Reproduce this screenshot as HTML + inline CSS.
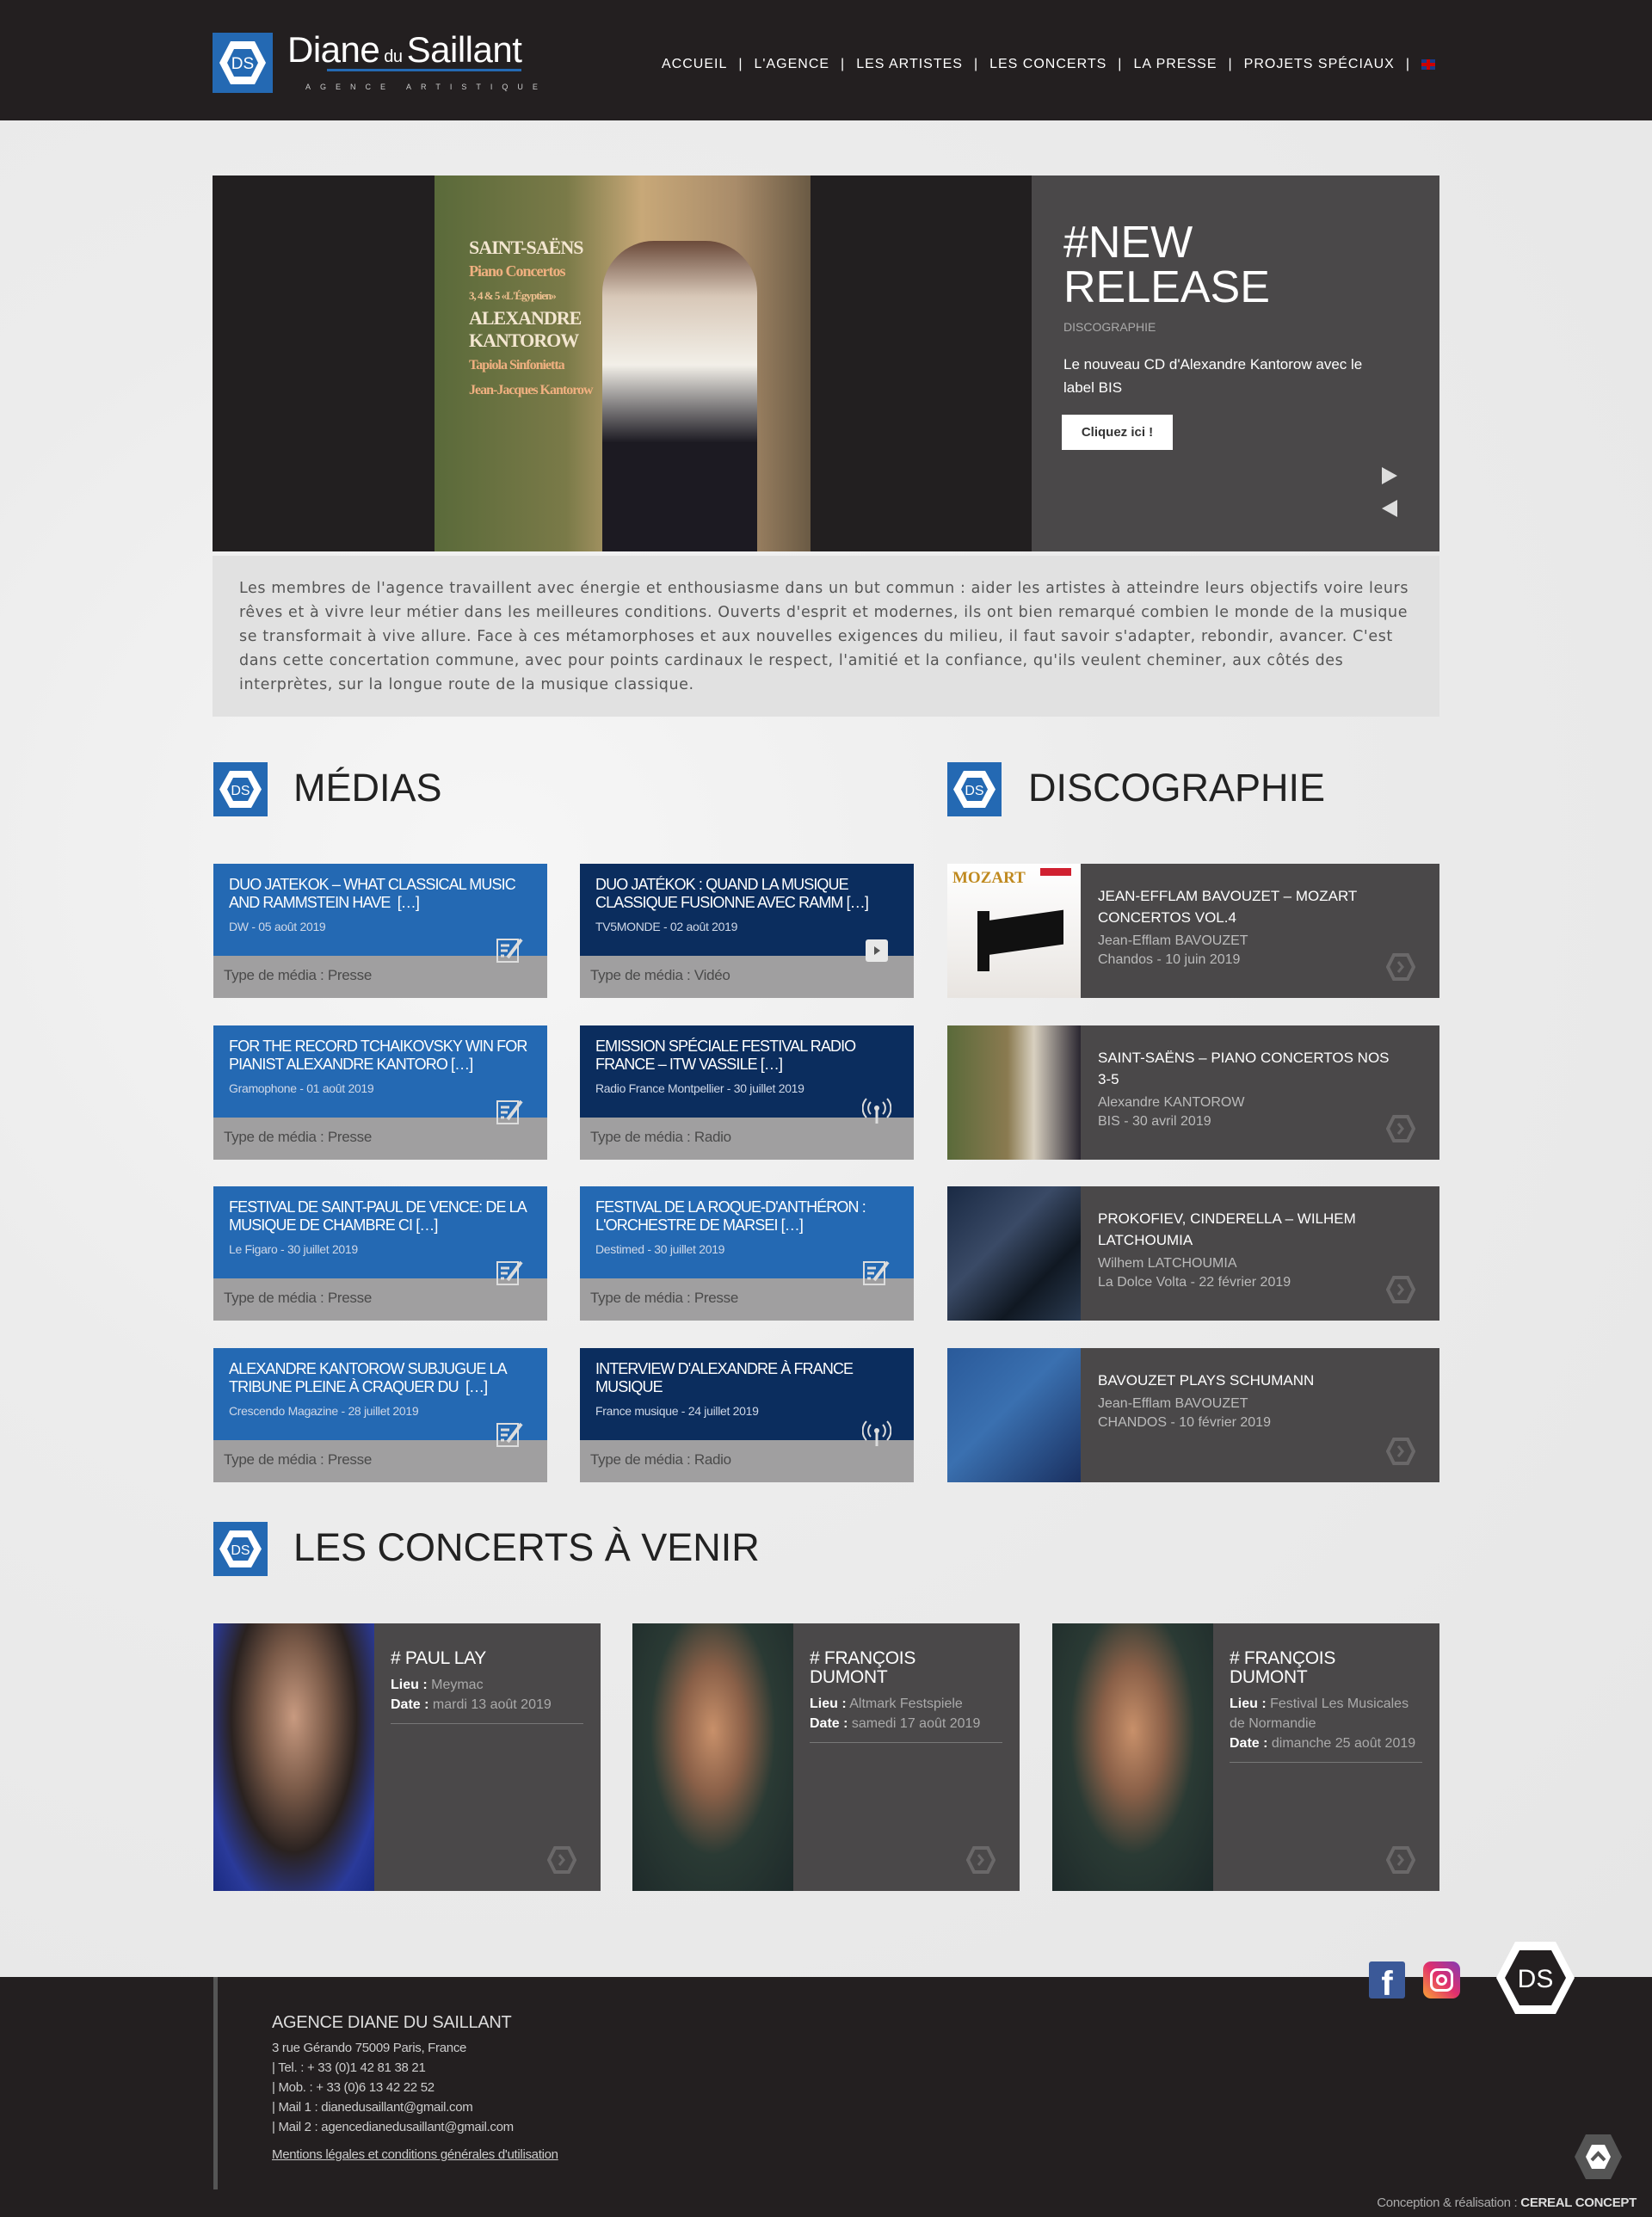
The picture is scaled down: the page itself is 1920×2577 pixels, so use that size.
<!DOCTYPE html>
<html><head><meta charset="utf-8"><style>
*{margin:0;padding:0;box-sizing:border-box}
body{width:1920px;height:2577px;background:#ececec;font-family:"Liberation Sans",sans-serif;position:relative;overflow:hidden}
.a{position:absolute}
.bg{position:absolute;left:0;top:140px;width:1920px;height:2158px;background:radial-gradient(ellipse at 30% 40%,#f6f6f6 0%,#ececec 40%,#e6e6e6 100%)}
header{position:absolute;left:0;top:0;width:1920px;height:140px;background:#231f20}
.nav{position:absolute;top:66px;left:769px;color:#fff;font-size:16px;letter-spacing:1px;white-space:nowrap}
.nav span{margin:0 13px}
.mc{position:absolute;width:388px;height:156px}
.mc .t{height:107px;padding:14px 18px;color:#fff}
.mc h3{font-size:18px;font-weight:normal;line-height:21px;letter-spacing:-.9px;text-transform:uppercase}
.mc p{font-size:14px;color:#cfd8e8;margin-top:9px;letter-spacing:-.3px}
.mc .b{height:49px;background:#a09fa0;color:#4a4a4a;font-size:17px;padding:13px 12px;letter-spacing:-.3px}
.l{background:#2469b3}.d{background:#0b2d5e}
.ic{position:absolute;right:26px;top:82px;width:34px;height:34px}
.dc{position:absolute;left:1101px;width:572px;height:156px;background:#4a4849}
.dc .im{position:absolute;left:0;top:0;width:155px;height:156px}
.dc h3{position:absolute;left:175px;top:25px;width:370px;font-size:17px;font-weight:normal;color:#fff;line-height:25px}
.dc p{font-size:16px;color:#bbb;line-height:22px;margin-top:4px}
.arr{position:absolute;right:28px;bottom:20px}
.cc{position:absolute;top:1887px;width:450px;height:311px;background:#4a4849}
.cc .im{position:absolute;left:0;top:0;width:187px;height:311px}
.cc .tx{position:absolute;left:206px;top:30px;width:224px;color:#fff}
.cc h3{font-size:21px;font-weight:normal;line-height:22px;letter-spacing:-.3px;width:190px}
.cc p{font-size:16px;line-height:23px;color:#aaa;margin-top:8px}
.cc p b{color:#fff}
.cc hr{border:0;border-top:1px solid #777;margin-top:10px}
.sh{position:absolute;font-size:45px;color:#222;font-weight:300;letter-spacing:0}
footer{position:absolute;left:0;top:2298px;width:1920px;height:279px;background:#231f20}
.fl{color:#ccc;letter-spacing:-.3px}
</style></head><body>
<div class="bg"></div>
<header>
 <svg class="a" style="left:247px;top:38px" width="70" height="70" viewBox="0 0 70 70"><rect width="70" height="70" fill="#2469b3"/><polygon points="21,10 49,10 62,35 49,60 21,60 8,35" fill="#fff"/><polygon points="25,19 45,19 53,35 45,51 25,51 17,35" fill="#2469b3"/><text x="35" y="42" text-anchor="middle" font-size="19" fill="#fff" font-family="Liberation Sans">DS</text></svg>
 <div class="a" style="left:334px;top:34px;color:#fff;font-size:42px;letter-spacing:-.5px;white-space:nowrap">Diane<span style="font-size:20px"> du </span>Saillant</div>
 <div class="a" style="left:380px;top:80px;width:226px;height:3px;background:#2469b3"></div>
 <div class="a" style="left:355px;top:96px;color:#ccc;font-size:9px;letter-spacing:11px;white-space:nowrap">AGENCE ARTISTIQUE</div>
 <div class="nav">ACCUEIL<span>|</span>L'AGENCE<span>|</span>LES ARTISTES<span>|</span>LES CONCERTS<span>|</span>LA PRESSE<span>|</span>PROJETS SPÉCIAUX<span>|</span><span style="display:inline-block;width:16px;height:12px;margin:0;background:linear-gradient(90deg,transparent 6px,#c00 6px,#c00 10px,transparent 10px),linear-gradient(0deg,#1a3a8a 4px,#c00 4px,#c00 8px,#1a3a8a 8px);vertical-align:middle"></span></div>
</header>

<div class="a" style="left:247px;top:204px;width:952px;height:437px;background:#221f20"></div>
<div class="a" style="left:505px;top:204px;width:437px;height:437px;background:linear-gradient(90deg,#5a6a3a 0%,#7a7a48 35%,#c8a878 55%,#a98c6a 80%,#6a5a44 100%)"></div>
<div class="a" style="left:700px;top:280px;width:180px;height:361px;background:linear-gradient(180deg,#6b4a3a 0%,#d8c8b8 18%,#f2efe8 40%,#1c1a22 65%,#1c1a22 100%);border-radius:60px 60px 0 0"></div>
<div class="a" style="left:545px;top:275px;color:#f3e6d0;font-family:'Liberation Serif',serif;font-size:22px;line-height:26px;font-weight:bold;letter-spacing:-1px">SAINT-SAËNS<br><span style="color:#f0b080;font-size:18px">Piano Concertos</span><br><span style="font-size:13px;color:#f0c090">3, 4 &amp; 5 «L'Égyptien»</span><br>ALEXANDRE<br>KANTOROW<br><span style="color:#f0b080;font-size:16px">Tapiola Sinfonietta<br>Jean-Jacques Kantorow</span></div>
<div class="a" style="left:1199px;top:204px;width:474px;height:437px;background:#4a4849"></div>
<div class="a" style="left:1236px;top:256px;color:#fff;font-size:52px;line-height:52px;font-weight:300">#NEW<br>RELEASE</div>
<div class="a" style="left:1236px;top:372px;color:#aaa;font-size:14px">DISCOGRAPHIE</div>
<div class="a" style="left:1236px;top:410px;width:376px;color:#fff;font-size:17px;line-height:27px">Le nouveau CD d'Alexandre Kantorow avec le label BIS</div>
<div class="a" style="left:1234px;top:482px;width:129px;height:41px;background:#fff;color:#333;font-size:15px;font-weight:bold;text-align:center;line-height:41px">Cliquez ici !</div>
<div class="a" style="left:1606px;top:543px;width:0;height:0;border-left:18px solid #ddd;border-top:10px solid transparent;border-bottom:10px solid transparent"></div>
<div class="a" style="left:1606px;top:581px;width:0;height:0;border-right:18px solid #ddd;border-top:10px solid transparent;border-bottom:10px solid transparent"></div>

<div class="a" style="left:247px;top:646px;width:1426px;height:187px;background:#e1e1e1;padding:24px 32px 0 31px;color:#555;font-family:'DejaVu Sans',sans-serif;font-size:17.5px;line-height:28px;letter-spacing:.6px">Les membres de l'agence travaillent avec énergie et enthousiasme dans un but commun : aider les artistes à atteindre leurs objectifs voire leurs rêves et à vivre leur métier dans les meilleures conditions. Ouverts d'esprit et modernes, ils ont bien remarqué combien le monde de la musique se transformait à vive allure. Face à ces métamorphoses et aux nouvelles exigences du milieu, il faut savoir s'adapter, rebondir, avancer. C'est dans cette concertation commune, avec pour points cardinaux le respect, l'amitié et la confiance, qu'ils veulent cheminer, aux côtés des interprètes, sur la longue route de la musique classique.</div>

<svg width="0" height="0" style="position:absolute"><defs><g id="hx"><rect width="63" height="63" fill="#2469b3"/><polygon points="19,10 44,10 56,31.5 44,53 19,53 7,31.5" fill="#fff"/><polygon points="23,18 40,18 47,31.5 40,45 23,45 16,31.5" fill="#2469b3"/><text x="31.5" y="38" text-anchor="middle" font-size="16" fill="#fff" font-family="Liberation Sans">DS</text></g>
<g id="ar"><polygon points="9,2 25,2 32,16 25,30 9,30 2,16" fill="none" stroke="#6a6869" stroke-width="4"/><path d="M14 10 L19 16 L14 22" fill="none" stroke="#6a6869" stroke-width="3"/></g></defs></svg>
<svg class="a" style="left:248px;top:886px" width="63" height="63"><use href="#hx"/></svg>
<div class="sh" style="left:341px;top:890px">MÉDIAS</div>
<svg class="a" style="left:1101px;top:886px" width="63" height="63"><use href="#hx"/></svg>
<div class="sh" style="left:1195px;top:890px">DISCOGRAPHIE</div>
<svg class="a" style="left:248px;top:1769px" width="63" height="63"><use href="#hx"/></svg>
<div class="sh" style="left:341px;top:1773px">LES CONCERTS À VENIR</div>

<div class="mc" style="left:248px;top:1004px"><div class="t l"><h3>Duo Jatekok – What classical music and Rammstein have &nbsp;[…]</h3><p>DW - 05 août 2019</p></div><div class="b">Type de média : Presse</div><svg class="ic" viewBox="0 0 34 34"><rect x="2" y="6" width="24" height="26" fill="none" stroke="#ddd" stroke-width="2"/><path d="M6 13h10M6 19h8M6 25h4" stroke="#ddd" stroke-width="3"/><path d="M14 27 L30 6" stroke="#ddd" stroke-width="4"/></svg></div>
<div class="mc" style="left:674px;top:1004px"><div class="t d"><h3>Duo Jatékok : quand la musique classique fusionne avec Ramm […]</h3><p>TV5MONDE - 02 août 2019</p></div><div class="b">Type de média : Vidéo</div><svg class="ic" viewBox="0 0 34 34"><rect x="4" y="6" width="26" height="26" rx="3" fill="#e8e8e8"/><path d="M14 14l7 5-7 5z" fill="#555"/></svg></div>
<div class="mc" style="left:248px;top:1192px"><div class="t l"><h3>For the record Tchaikovsky win for pianist Alexandre Kantoro […]</h3><p>Gramophone - 01 août 2019</p></div><div class="b">Type de média : Presse</div><svg class="ic" viewBox="0 0 34 34"><rect x="2" y="6" width="24" height="26" fill="none" stroke="#ddd" stroke-width="2"/><path d="M6 13h10M6 19h8M6 25h4" stroke="#ddd" stroke-width="3"/><path d="M14 27 L30 6" stroke="#ddd" stroke-width="4"/></svg></div>
<div class="mc" style="left:674px;top:1192px"><div class="t d"><h3>Emission spéciale Festival Radio France – ITW Vassile […]</h3><p>Radio France Montpellier - 30 juillet 2019</p></div><div class="b">Type de média : Radio</div><svg class="ic" viewBox="0 0 34 34"><circle cx="17" cy="14" r="3" fill="#ddd"/><path d="M17 14v18" stroke="#ddd" stroke-width="3"/><path d="M10 7a10 10 0 0 0 0 14M24 7a10 10 0 0 1 0 14M5 3a16 16 0 0 0 0 22M29 3a16 16 0 0 1 0 22" fill="none" stroke="#ddd" stroke-width="2"/></svg></div>
<div class="mc" style="left:248px;top:1379px"><div class="t l"><h3>Festival de Saint-Paul de Vence: de la musique de chambre ci […]</h3><p>Le Figaro - 30 juillet 2019</p></div><div class="b">Type de média : Presse</div><svg class="ic" viewBox="0 0 34 34"><rect x="2" y="6" width="24" height="26" fill="none" stroke="#ddd" stroke-width="2"/><path d="M6 13h10M6 19h8M6 25h4" stroke="#ddd" stroke-width="3"/><path d="M14 27 L30 6" stroke="#ddd" stroke-width="4"/></svg></div>
<div class="mc" style="left:674px;top:1379px"><div class="t l"><h3>Festival de La Roque-d'Anthéron : l'orchestre de Marsei […]</h3><p>Destimed - 30 juillet 2019</p></div><div class="b">Type de média : Presse</div><svg class="ic" viewBox="0 0 34 34"><rect x="2" y="6" width="24" height="26" fill="none" stroke="#ddd" stroke-width="2"/><path d="M6 13h10M6 19h8M6 25h4" stroke="#ddd" stroke-width="3"/><path d="M14 27 L30 6" stroke="#ddd" stroke-width="4"/></svg></div>
<div class="mc" style="left:248px;top:1567px"><div class="t l"><h3>Alexandre Kantorow subjugue la tribune pleine à craquer du &nbsp;[…]</h3><p>Crescendo Magazine - 28 juillet 2019</p></div><div class="b">Type de média : Presse</div><svg class="ic" viewBox="0 0 34 34"><rect x="2" y="6" width="24" height="26" fill="none" stroke="#ddd" stroke-width="2"/><path d="M6 13h10M6 19h8M6 25h4" stroke="#ddd" stroke-width="3"/><path d="M14 27 L30 6" stroke="#ddd" stroke-width="4"/></svg></div>
<div class="mc" style="left:674px;top:1567px"><div class="t d"><h3>Interview d'Alexandre à France Musique</h3><p>France musique - 24 juillet 2019</p></div><div class="b">Type de média : Radio</div><svg class="ic" viewBox="0 0 34 34"><circle cx="17" cy="14" r="3" fill="#ddd"/><path d="M17 14v18" stroke="#ddd" stroke-width="3"/><path d="M10 7a10 10 0 0 0 0 14M24 7a10 10 0 0 1 0 14M5 3a16 16 0 0 0 0 22M29 3a16 16 0 0 1 0 22" fill="none" stroke="#ddd" stroke-width="2"/></svg></div>

<div class="dc" style="top:1004px"><div class="im" style="background:linear-gradient(180deg,#fff 0%,#f2f0ee 60%,#e8e4e0 100%)"><div class="a" style="left:6px;top:6px;color:#c08a20;font-family:'Liberation Serif',serif;font-weight:bold;font-size:19px">MOZART</div><div class="a" style="left:108px;top:5px;width:36px;height:9px;background:#d02030"></div><div class="a" style="left:45px;top:60px;width:90px;height:40px;background:#111;transform:skewY(-8deg)"></div><div class="a" style="left:35px;top:55px;width:14px;height:70px;background:#111"></div></div><h3>JEAN-EFFLAM BAVOUZET – MOZART CONCERTOS VOL.4<p>Jean-Efflam BAVOUZET<br>Chandos - 10 juin 2019</p></h3><svg class="arr" width="34" height="32"><use href="#ar"/></svg></div>
<div class="dc" style="top:1192px"><div class="im" style="background:linear-gradient(90deg,#5a6a3a 0%,#8a7a50 45%,#d8d0c0 65%,#2a2630 100%)"></div><h3 style="width:350px;word-break:break-all">SAINT-SAËNS – PIANO CONCERTOS NOS 3-5<p style="word-break:normal">Alexandre KANTOROW<br>BIS - 30 avril 2019</p></h3><svg class="arr" width="34" height="32"><use href="#ar"/></svg></div>
<div class="dc" style="top:1379px"><div class="im" style="background:linear-gradient(135deg,#1a2a44 0%,#3a4a66 40%,#101822 70%,#2a3a50 100%)"></div><h3>PROKOFIEV, CINDERELLA – WILHEM LATCHOUMIA<p>Wilhem LATCHOUMIA<br>La Dolce Volta - 22 février 2019</p></h3><svg class="arr" width="34" height="32"><use href="#ar"/></svg></div>
<div class="dc" style="top:1567px"><div class="im" style="background:linear-gradient(135deg,#2a5a9a 0%,#3a70b0 45%,#1a3060 100%)"></div><h3>BAVOUZET PLAYS SCHUMANN<p>Jean-Efflam BAVOUZET<br>CHANDOS - 10 février 2019</p></h3><svg class="arr" width="34" height="32"><use href="#ar"/></svg></div>

<div class="cc" style="left:248px"><div class="im" style="background:radial-gradient(ellipse at 50% 35%,#c89a80 0%,#7a5a48 30%,#2a2220 55%,#2a3a9a 80%,#1a2a80 100%)"></div><div class="tx"><h3># PAUL LAY</h3><p><b>Lieu :</b> Meymac<br><b>Date :</b> mardi 13 août 2019</p><hr></div><svg class="arr" width="34" height="32"><use href="#ar"/></svg></div>
<div class="cc" style="left:735px"><div class="im" style="background:radial-gradient(ellipse at 50% 40%,#c8906a 0%,#8a6048 28%,#2a3a34 55%,#1e2a2a 100%)"></div><div class="tx"><h3># FRANÇOIS DUMONT</h3><p><b>Lieu :</b> Altmark Festspiele<br><b>Date :</b> samedi 17 août 2019</p><hr></div><svg class="arr" width="34" height="32"><use href="#ar"/></svg></div>
<div class="cc" style="left:1223px"><div class="im" style="background:radial-gradient(ellipse at 50% 40%,#c8906a 0%,#8a6048 28%,#2a3a34 55%,#1e2a2a 100%)"></div><div class="tx"><h3># FRANÇOIS DUMONT</h3><p><b>Lieu :</b> Festival Les Musicales de Normandie<br><b>Date :</b> dimanche 25 août 2019</p><hr></div><svg class="arr" width="34" height="32"><use href="#ar"/></svg></div>

<footer>
 <div class="a" style="left:248px;top:0;width:5px;height:247px;background:#555"></div>
 <div class="a fl" style="left:316px;top:42px;font-size:20px;color:#ddd">AGENCE DIANE DU SAILLANT</div>
 <div class="a fl" style="left:316px;top:71px;font-size:15px;line-height:23px">3 rue Gérando 75009 Paris, France<br>| Tel. : + 33 (0)1 42 81 38 21<br>| Mob. : + 33 (0)6 13 42 22 52<br>| Mail 1 : dianedusaillant@gmail.com<br>| Mail 2 : agencedianedusaillant@gmail.com</div>
 <div class="a fl" style="left:316px;top:198px;font-size:15px;text-decoration:underline">Mentions légales et conditions générales d'utilisation</div>
 <div class="a fl" style="right:18px;top:254px;font-size:15px;color:#aaa">Conception &amp; réalisation : <b style="color:#ddd">CEREAL CONCEPT</b></div>
 <svg class="a" style="left:1828px;top:181px" width="59" height="56"><polygon points="15,2 44,2 57,28 44,54 15,54 2,28" fill="#555"/><polygon points="22,14 37,14 44,28 37,42 22,42 15,28" fill="#fff"/><path d="M22 32 L29.5 24 L37 32" fill="none" stroke="#555" stroke-width="4"/></svg>
</footer>
<div class="a" style="left:1591px;top:2280px;width:42px;height:43px;background:#3b5998;border-radius:3px;color:#fff;font-size:40px;font-weight:bold;text-align:center;line-height:52px;overflow:hidden">f</div>
<div class="a" style="left:1654px;top:2280px;width:43px;height:43px;border-radius:9px;background:linear-gradient(45deg,#f9a334,#e1306c 50%,#833ab4)"><div class="a" style="left:8px;top:8px;width:27px;height:27px;border:3px solid #fff;border-radius:8px"></div><div class="a" style="left:15px;top:15px;width:13px;height:13px;border:3px solid #fff;border-radius:50%"></div></div>
<svg class="a" style="left:1736px;top:2254px" width="97" height="90"><polygon points="25,3 72,3 94,45 72,87 25,87 3,45" fill="#fff"/><polygon points="30,13 67,13 84,45 67,77 30,77 13,45" fill="#231f20"/><text x="48.5" y="56" text-anchor="middle" font-size="30" fill="#fff" font-family="Liberation Sans">DS</text></svg>
</body></html>
